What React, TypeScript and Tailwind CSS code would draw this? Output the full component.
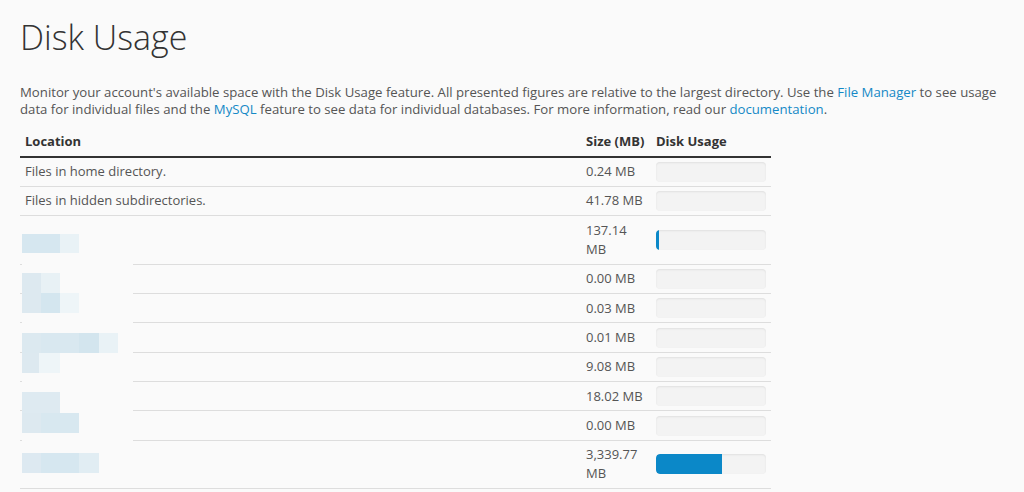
import React from 'react';

type Row = { location?: string; size: string; pct: number };

const rows: Row[] = [
    { location: 'Files in home directory.', size: '0.24 MB', pct: 0 },
    { location: 'Files in hidden subdirectories.', size: '41.78 MB', pct: 0 },
    { size: '137.14 MB', pct: 3 },
    { size: '0.00 MB', pct: 0 },
    { size: '0.03 MB', pct: 0 },
    { size: '0.01 MB', pct: 0 },
    { size: '9.08 MB', pct: 0 },
    { size: '18.02 MB', pct: 0 },
    { size: '0.00 MB', pct: 0 },
    { size: '3,339.77 MB', pct: 60 },
];

// pixelated blur blocks over the redacted directory names (page coords)
const blurBlocks = [
    { x: 22, y: 234, w: 38, h: 19, c: '#d6e7f0' },
    { x: 60, y: 234, w: 19, h: 19, c: '#e9f2f6' },
    { x: 22, y: 273, w: 19, h: 20, c: '#dde9f0' },
    { x: 41, y: 273, w: 19, h: 20, c: '#e8f1f5' },
    { x: 22, y: 293, w: 19, h: 20, c: '#dde9f0' },
    { x: 41, y: 293, w: 19, h: 20, c: '#d4e6ef' },
    { x: 60, y: 293, w: 19, h: 20, c: '#eef5f8' },
    { x: 22, y: 333, w: 19, h: 20, c: '#dce9f0' },
    { x: 41, y: 333, w: 38, h: 20, c: '#d9e8f0' },
    { x: 79, y: 333, w: 20, h: 20, c: '#d3e5ee' },
    { x: 99, y: 333, w: 19, h: 20, c: '#e9f2f6' },
    { x: 22, y: 353, w: 17, h: 20, c: '#dde9f0' },
    { x: 39, y: 353, w: 21, h: 20, c: '#eef5f8' },
    { x: 22, y: 392, w: 38, h: 21, c: '#deeaf1' },
    { x: 22, y: 413, w: 19, h: 20, c: '#dde9f0' },
    { x: 41, y: 413, w: 38, h: 20, c: '#d8e8f0' },
    { x: 22, y: 453, w: 19, h: 20, c: '#dde9f1' },
    { x: 41, y: 453, w: 38, h: 20, c: '#d6e7f0' },
    { x: 79, y: 453, w: 20, h: 20, c: '#e1edf3' },
];

const UsageBar: React.FC<{ pct: number }> = ({ pct }) => (
    <div className="h-5 w-[110px] rounded bg-[#f3f3f3] shadow-[inset_0_1px_2px_rgba(0,0,0,0.08)] overflow-hidden">
        {pct > 0 && <div className="h-full rounded-l bg-[#0b88c8]" style={{ width: `${pct}%` }} />}
    </div>
);

export default function App() {
    return (
        <div className="relative h-[492px] bg-[#fafafa] px-5 text-[#333] font-['Open_Sans',sans-serif] overflow-hidden">
            <h1 className="pt-[19px] text-[34px] font-light leading-[1.1] text-[#333]">Disk Usage</h1>

            <p className="mt-[28px] text-[13.2px] leading-[17px] text-[#555]">
                Monitor your account's available space with the Disk Usage feature. All presented figures are relative to the largest directory. Use the{' '}
                <a className="text-[#1589c6]">File Manager</a> to see usage data for individual files and the{' '}
                <a className="text-[#1589c6]">MySQL</a> feature to see data for individual databases. For more information, read our{' '}
                <a className="text-[#1589c6]">documentation</a>.
            </p>

            <table className="mt-[9px] w-[751px] table-fixed border-collapse text-[13px] leading-[19.3px]">
                <colgroup>
                    <col />
                    <col className="w-[70px]" />
                    <col className="w-[120px]" />
                </colgroup>
                <thead>
                    <tr className="border-b-2 border-[#333]">
                        <th className="px-[5px] py-[4.5px] text-left font-bold whitespace-nowrap">Location</th>
                        <th className="px-[5px] py-[4.5px] text-left font-bold whitespace-nowrap">Size (MB)</th>
                        <th className="px-[5px] py-[4.5px] text-left font-bold whitespace-nowrap">Disk Usage</th>
                    </tr>
                </thead>
                <tbody>
                    {rows.map((r, i) => (
                        <tr key={i} className="border-b border-[#dddddd] text-[#555]">
                            <td className="px-[5px] py-[4.5px] align-middle">{r.location ?? ''}</td>
                            <td className="px-[5px] py-[4.5px] align-middle">{r.size}</td>
                            <td className="px-[5px] py-0 align-middle">
                                <UsageBar pct={r.pct} />
                            </td>
                        </tr>
                    ))}
                </tbody>
            </table>

            {/* redaction overlay */}
            <div className="absolute left-[22px] top-[216px] h-[266px] w-[111px] bg-[#fafafa]" />
            {blurBlocks.map((b, i) => (
                <div
                    key={i}
                    className="absolute"
                    style={{ left: b.x, top: b.y, width: b.w, height: b.h, background: b.c }}
                />
            ))}
        </div>
    );
}
